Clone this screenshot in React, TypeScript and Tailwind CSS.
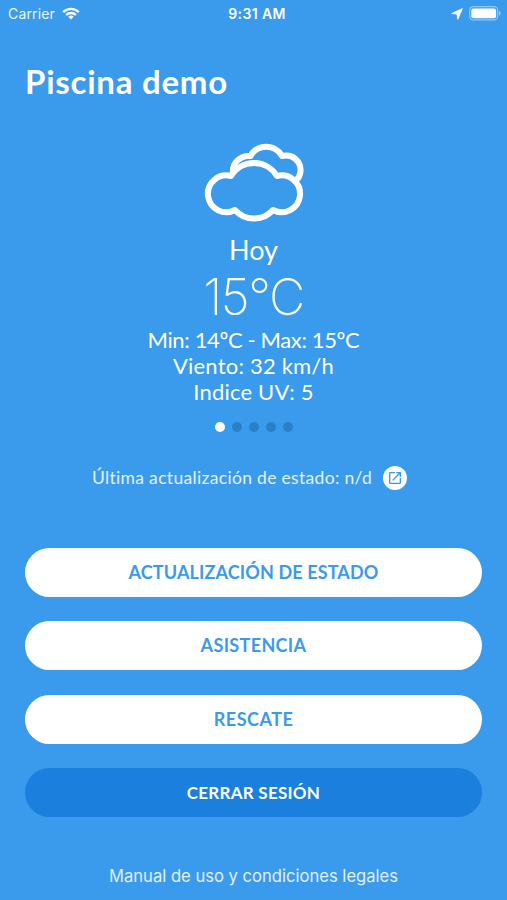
import { useState } from 'react';
import { clsx } from 'clsx';

const forecast = [
  {
    day: 'Hoy',
    temperature: '15°C',
    details: [
      { text: 'Min: 14ºC - Max: 15ºC', className: 'tracking-[-0.37px]' },
      { text: 'Viento: 32 km/h', className: 'tracking-[0.2px]' },
      { text: 'Indice UV: 5', className: 'tracking-[0.2px]' },
    ],
  },
];

const actions = [
  { label: 'ACTUALIZACIÓN DE ESTADO', className: 'bg-white text-[#3a9aeb] text-[18px] tracking-[0.13px]' },
  { label: 'ASISTENCIA', className: 'bg-white text-[#3a9aeb] text-[18px] tracking-[0.35px]' },
  { label: 'RESCATE', className: 'bg-white text-[#3a9aeb] text-[18px] tracking-[0.5px]' },
  { label: 'CERRAR SESIÓN', className: 'bg-[#1a7fdd] text-white text-[17px] tracking-[0.25px]' },
];

function WifiIcon() {
  return (
    <svg className="h-[13px] w-[18px]" viewBox="0 0 18 13" fill="none" stroke="white" strokeWidth="2.3">
      <path d="M1.2 5.1a11.1 11.1 0 0 1 15.6 0" />
      <path d="M4.1 8a7 7 0 0 1 9.8 0" />
      <path d="M9 12.6 6.3 9.8a3.9 3.9 0 0 1 5.4 0Z" fill="white" stroke="none" />
    </svg>
  );
}

function StatusBar() {
  return (
    <div className="grid h-[27px] grid-cols-[1fr_auto_1fr] items-center pl-2 pr-[6px] font-['Inter',sans-serif] text-[14px] text-white">
      <div className="flex items-center gap-[7px]">
        <span className="tracking-[0.15px] text-white/90">Carrier</span>
        <WifiIcon />
      </div>
      <span className="pl-[5px] text-center font-semibold tracking-[0.4px]">9:31 AM</span>
      <div className="flex items-center justify-end gap-[6px]">
        <svg className="h-3 w-3" viewBox="0 0 12 12" fill="white" stroke="white" strokeWidth="0.8" strokeLinejoin="round">
          <path d="M11.4.6 6.9 11.3 5.900 6.100.6 5.500Z" />
        </svg>
        <svg className="h-[15px] w-8" viewBox="0 0 32 15">
          <rect x="0.7" y="0.7" width="28" height="13.2" rx="3.6" fill="none" stroke="white" strokeOpacity="0.45" strokeWidth="1.2" />
          <rect x="2.3" y="2.4" width="24.8" height="9.8" rx="2" fill="white" />
          <path d="M30 5v4.6c1-.4 1.7-1.2 1.7-2.3S31 5.4 30 5Z" fill="white" fillOpacity="0.5" />
        </svg>
      </div>
    </div>
  );
}

function CloudsIcon() {
  return (
    <svg className="h-[84px] w-[108px]" viewBox="0 0 108 84" fill="none" stroke="white" strokeWidth="6" strokeLinejoin="round">
      <path d="M33 34C31.500 23.500 40 15 50.500 16A18 18 0 0 1 82 16A14.500 14.500 0 0 1 96.500 40" />
      <path
        d="M31 36A26.800 26.800 0 0 1 77 36A18.400 18.400 0 1 1 73 70A25.300 25.300 0 0 1 35 70A18.400 18.400 0 1 1 31 36Z"
        fill="#3a9aeb"
      />
    </svg>
  );
}

function OpenIcon() {
  return (
    <svg className="h-4 w-4" viewBox="0 0 24 24" fill="#3a9aeb">
      <path d="M19 19H5V5h7V3H5a2 2 0 0 0-2 2v14a2 2 0 0 0 2 2h14c1.1 0 2-.9 2-2v-7h-2v7zM14 3v2h3.59l-9.83 9.83 1.41 1.41L19 6.41V10h2V3h-7z" />
    </svg>
  );
}

export default function App() {
  const [page, setPage] = useState(0);
  const today = forecast[0];

  return (
    <main className="flex h-[900px] w-[507px] flex-col overflow-hidden bg-[#3a9aeb] font-['Lato',sans-serif] text-white">
      <StatusBar />
      <h1 className="mt-[34px] pl-[25px] text-[33px] leading-10 font-bold tracking-[0.75px]">Piscina demo</h1>

      <section className="mt-[39px] flex flex-col items-center">
        <CloudsIcon />
        <h2 className="mt-[10px] text-[27px] leading-8">{today.day}</h2>
        <p className="h-[62px] font-['Inter',sans-serif] text-[50px] leading-[62px] font-extralight tracking-[-1.5px]">
          {today.temperature}
        </p>
        <div className="-mt-px text-center text-[22px] leading-[26px]">
          {today.details.map((detail) => (
            <p key={detail.text} className={detail.className}>{detail.text}</p>
          ))}
        </div>
        <div className="mt-[17px] flex gap-[7px]">
          {[0, 1, 2, 3, 4].map((i) => (
            <button
              key={i}
              aria-label={`${i + 1}`}
              onClick={() => setPage(i)}
              className={clsx('h-[10px] w-[10px] rounded-full', i === page ? 'bg-white' : 'bg-[#2b7fc6]')}
            />
          ))}
        </div>
      </section>

      <div className="mt-[34px] flex h-6 items-center gap-[10px] pl-[92px]">
        <span className="w-[281px] text-[17.5px] tracking-[0.32px] whitespace-nowrap text-white/85">
          Última actualización de estado: n/d
        </span>
        <button className="flex h-6 w-6 items-center justify-center rounded-full bg-white">
          <OpenIcon />
        </button>
      </div>

      <div className="mt-[58px] flex flex-col gap-[24.3px] px-[25px]">
        {actions.map((action) => (
          <button key={action.label} className={clsx('h-[49px] rounded-full font-bold', action.className)}>
            {action.label}
          </button>
        ))}
      </div>

      <a className="mt-[47px] text-center font-['Inter',sans-serif] text-[16.6px] text-white/85">
        Manual de uso y condiciones legales
      </a>
    </main>
  );
}
